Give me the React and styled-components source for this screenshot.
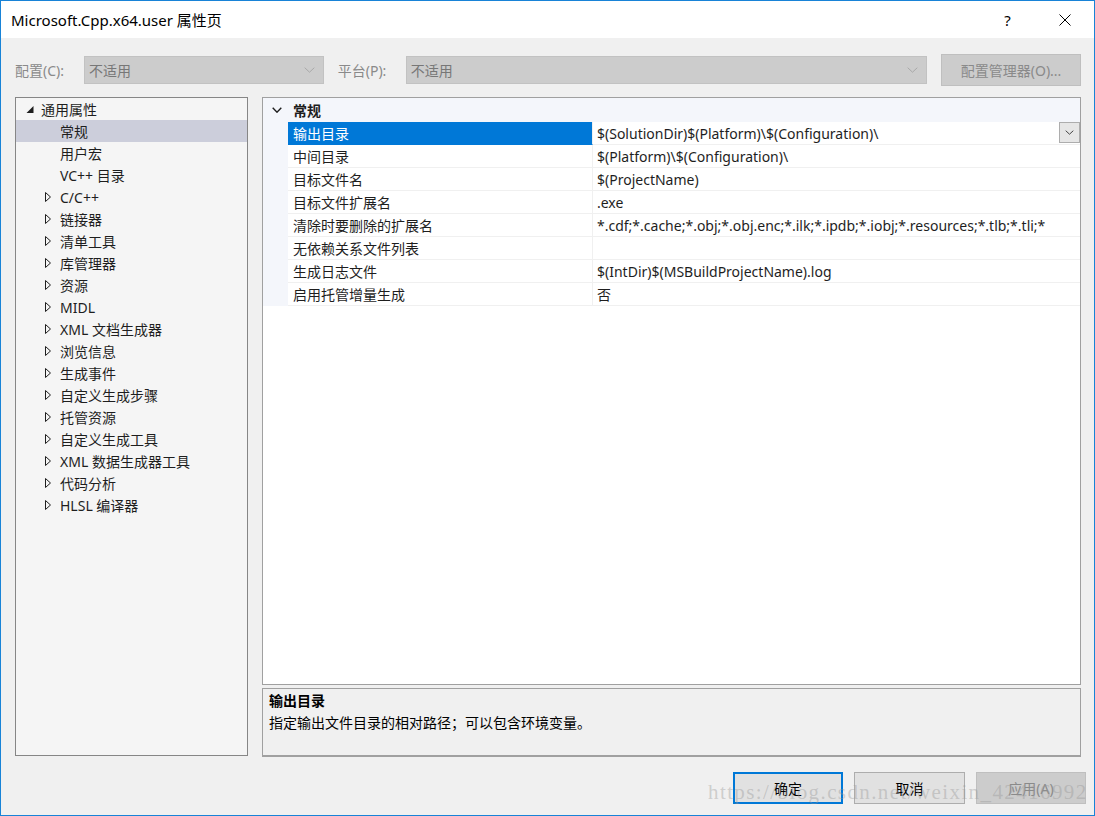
import React from "react";
import styled, { createGlobalStyle } from "styled-components";

const GlobalStyle = createGlobalStyle`
  body {
    margin: 0;
    font-family: "Noto Sans", "Noto Sans CJK SC", sans-serif;
    background: #f0f0f0;
  }
`;

const FONT = `"Noto Sans", "Noto Sans CJK SC", sans-serif`;

const Window = styled.div`
  position: relative;
  width: 1095px;
  height: 816px;
  box-sizing: border-box;
  border: 1px solid #1883d7;
  background: #f0f0f0;
  display: flex;
  flex-direction: column;
  font-family: ${FONT};
  overflow: hidden;
`;

const TitleBar = styled.div`
  height: 37px;
  background: #fff;
  display: flex;
  align-items: center;
  padding-left: 10px;
`;

const Title = styled.div`
  flex: 1;
  font-size: 15px;
  color: #000;
`;

const CaptionButton = styled.div`
  width: ${p => p.w}px;
  height: 37px;
  display: flex;
  align-items: center;
  justify-content: center;
  font-size: 15px;
  color: #000;
`;

const Body = styled.div`
  padding: 0 13px 0 14px;
  display: flex;
  flex-direction: column;
`;

const ConfigRow = styled.div`
  margin-top: 16px;
  height: 32px;
  display: flex;
  align-items: center;
`;

const ConfigLabel = styled.div`
  width: ${p => p.w}px;
  font-size: 14px;
  color: #8a8a8a;
`;

const Combo = styled.div`
  width: ${p => p.w}px;
  height: 28px;
  box-sizing: border-box;
  background: #cccccc;
  border: 1px solid #c2c2c2;
  display: flex;
  align-items: center;
  padding: 0 8px 0 4px;
  font-size: 14px;
  color: #777;
  margin-right: ${p => p.mr || 0}px;
  span { flex: 1; }
`;

const ManagerButton = styled.div`
  width: 140px;
  height: 32px;
  box-sizing: border-box;
  background: #cccccc;
  border: 1px solid #bfbfbf;
  display: flex;
  align-items: center;
  justify-content: center;
  font-size: 14px;
  color: #8a8a8a;
`;

const Main = styled.div`
  margin-top: 11px;
  display: flex;
  gap: 14px;
`;

const TreePanel = styled.div`
  width: 233px;
  height: 659px;
  box-sizing: border-box;
  background: #f5f5f5;
  border: 1px solid #868686;
  padding-top: 0px;
`;

const TreeRow = styled.div`
  height: 22px;
  display: flex;
  align-items: center;
  padding-left: ${p => 9 + p.level * 19}px;
  background: ${p => (p.selected ? "#cccedb" : "transparent")};
  font-size: 14px;
  color: #1e1e1e;
  white-space: nowrap;
`;

const Expander = styled.div`
  width: 16px;
  height: 22px;
  display: flex;
  align-items: center;
`;

const RightColumn = styled.div`
  width: 819px;
  display: flex;
  flex-direction: column;
  gap: 3px;
`;

const GridPanel = styled.div`
  height: 588px;
  box-sizing: border-box;
  background: #fff;
  border: 1px solid #a0a0a0;
`;

const GridRow = styled.div`
  display: grid;
  grid-template-columns: 25px 305px 1fr;
  height: ${p => (p.header ? 24 : 23)}px;
  background: ${p => (p.header ? "#f4f6fb" : "#fff")};
  font-size: 14px;
`;

const Gutter = styled.div`
  background: #f4f6fb;
  display: flex;
  align-items: center;
  justify-content: center;
  padding-left: 3px;
`;

const HeaderText = styled.div`
  grid-column: 2 / 4;
  display: flex;
  align-items: center;
  padding-left: 5px;
  font-weight: bold;
  color: #1e1e1e;
`;

const LabelCell = styled.div`
  display: flex;
  align-items: center;
  padding-left: 5px;
  border-bottom: 1px solid ${p => (p.selected ? "#0078d7" : "#f0f0f0")};
  border-right: 1px solid #f0f0f0;
  background: ${p => (p.selected ? "#0078d7" : "#fff")};
  color: ${p => (p.selected ? "#fff" : "#1e1e1e")};
  white-space: nowrap;
`;

const ValueCell = styled.div`
  display: flex;
  align-items: center;
  padding-left: 4px;
  border-bottom: 1px solid #f0f0f0;
  color: #1e1e1e;
  white-space: nowrap;
  overflow: hidden;
  span { flex: 1; overflow: hidden; }
`;

const DropButton = styled.div`
  width: 21px;
  height: 21px;
  box-sizing: border-box;
  background: #e6e6e6;
  border: 1px solid #adadad;
  display: flex;
  align-items: center;
  justify-content: center;
  flex-shrink: 0;
  margin-bottom: 1px;
`;

const DescPanel = styled.div`
  height: 69px;
  box-sizing: border-box;
  background: #f0f0f0;
  border: 1px solid #a0a0a0;
  border-bottom-width: 2px;
  padding: 1px 6px;
  font-size: 14px;
  color: #000;
  line-height: 22px;
`;

const DescTitle = styled.div`
  font-weight: bold;
`;

const Footer = styled.div`
  margin-top: 15px;
  display: flex;
  justify-content: flex-end;
  gap: 11px;
  padding-right: 8px;
`;

const DialogButton = styled.div`
  width: ${p => p.w}px;
  height: 32px;
  box-sizing: border-box;
  display: flex;
  align-items: center;
  justify-content: center;
  font-size: 14px;
  background: ${p => (p.disabled ? "#cccccc" : "#e1e1e1")};
  border: ${p => (p.primary ? "2px solid #0078d7" : p.disabled ? "1px solid #bfbfbf" : "1px solid #adadad")};
  color: ${p => (p.disabled ? "#8a8a8a" : "#000")};
`;

const Watermark = styled.div`
  position: absolute;
  left: 707px;
  top: 779px;
  font-family: "Liberation Serif", serif;
  font-size: 21px;
  letter-spacing: 1.4px;
  color: rgba(150, 150, 150, 0.4);
  pointer-events: none;
  white-space: nowrap;
`;

const Chevron = ({ w = 10, h = 6, color = "#1e1e1e", sw = 1.4 }) => (
  <svg width={w} height={h} viewBox={`0 0 ${w} ${h}`}>
    <polyline points={`0.7,0.7 ${w / 2},${h - 0.8} ${w - 0.7},0.7`} fill="none" stroke={color} strokeWidth={sw} />
  </svg>
);

const Expanded = () => (
  <svg width="16" height="22" viewBox="0 0 16 22">
    <polygon points="8.5,8 8.5,15 1.5,15" fill="#1e1e1e" />
  </svg>
);

const Collapsed = () => (
  <svg width="16" height="22" viewBox="0 0 16 22">
    <polygon points="1.5,6.5 1.5,15.5 6.5,11" fill="none" stroke="#1e1e1e" strokeWidth="1" />
  </svg>
);

const Close = () => (
  <svg width="12" height="12" viewBox="0 0 12 12">
    <path d="M0.5 0.5 L11.5 11.5 M11.5 0.5 L0.5 11.5" stroke="#000" strokeWidth="1" />
  </svg>
);

const treeItems = [
  { label: "通用属性", level: 0, state: "open" },
  { label: "常规", level: 1, selected: true },
  { label: "用户宏", level: 1 },
  { label: "VC++ 目录", level: 1 },
  { label: "C/C++", level: 1, state: "closed" },
  { label: "链接器", level: 1, state: "closed" },
  { label: "清单工具", level: 1, state: "closed" },
  { label: "库管理器", level: 1, state: "closed" },
  { label: "资源", level: 1, state: "closed" },
  { label: "MIDL", level: 1, state: "closed" },
  { label: "XML 文档生成器", level: 1, state: "closed" },
  { label: "浏览信息", level: 1, state: "closed" },
  { label: "生成事件", level: 1, state: "closed" },
  { label: "自定义生成步骤", level: 1, state: "closed" },
  { label: "托管资源", level: 1, state: "closed" },
  { label: "自定义生成工具", level: 1, state: "closed" },
  { label: "XML 数据生成器工具", level: 1, state: "closed" },
  { label: "代码分析", level: 1, state: "closed" },
  { label: "HLSL 编译器", level: 1, state: "closed" },
];

const props = [
  { name: "输出目录", value: "$(SolutionDir)$(Platform)\\$(Configuration)\\", selected: true },
  { name: "中间目录", value: "$(Platform)\\$(Configuration)\\" },
  { name: "目标文件名", value: "$(ProjectName)" },
  { name: "目标文件扩展名", value: ".exe" },
  { name: "清除时要删除的扩展名", value: "*.cdf;*.cache;*.obj;*.obj.enc;*.ilk;*.ipdb;*.iobj;*.resources;*.tlb;*.tli;*" },
  { name: "无依赖关系文件列表", value: "" },
  { name: "生成日志文件", value: "$(IntDir)$(MSBuildProjectName).log" },
  { name: "启用托管增量生成", value: "否" },
];

export default function App() {
  return (
    <Window>
      <GlobalStyle />
      <TitleBar>
        <Title>Microsoft.Cpp.x64.user 属性页</Title>
        <CaptionButton w={57}>?</CaptionButton>
        <CaptionButton w={58}><Close /></CaptionButton>
      </TitleBar>
      <Body>
        <ConfigRow>
          <ConfigLabel w={69}>配置(C):</ConfigLabel>
          <Combo w={240} mr={14}>
            <span>不适用</span>
            <Chevron w={11} h={6} color="#a8a8a8" sw={1} />
          </Combo>
          <ConfigLabel w={68}>平台(P):</ConfigLabel>
          <Combo w={522} mr={14}>
            <span>不适用</span>
            <Chevron w={11} h={6} color="#a8a8a8" sw={1} />
          </Combo>
          <ManagerButton>配置管理器(O)...</ManagerButton>
        </ConfigRow>
        <Main>
          <TreePanel>
            {treeItems.map(item => (
              <TreeRow key={item.label} level={item.level} selected={item.selected}>
                <Expander>
                  {item.state === "open" && <Expanded />}
                  {item.state === "closed" && <Collapsed />}
                </Expander>
                {item.label}
              </TreeRow>
            ))}
          </TreePanel>
          <RightColumn>
            <GridPanel>
              <GridRow header>
                <Gutter><Chevron w={10} h={6} /></Gutter>
                <HeaderText>常规</HeaderText>
              </GridRow>
              {props.map(p => (
                <GridRow key={p.name}>
                  <Gutter />
                  <LabelCell selected={p.selected}>{p.name}</LabelCell>
                  <ValueCell>
                    <span>{p.value}</span>
                    {p.selected && (
                      <DropButton><Chevron w={9} h={5} color="#444" sw={1} /></DropButton>
                    )}
                  </ValueCell>
                </GridRow>
              ))}
            </GridPanel>
            <DescPanel>
              <DescTitle>输出目录</DescTitle>
              <div>指定输出文件目录的相对路径；可以包含环境变量。</div>
            </DescPanel>
          </RightColumn>
        </Main>
      </Body>
      <Footer>
        <DialogButton w={110} primary>确定</DialogButton>
        <DialogButton w={111}>取消</DialogButton>
        <DialogButton w={110} disabled>应用(A)</DialogButton>
      </Footer>
      <Watermark>https://blog.csdn.net/weixin_42416992</Watermark>
    </Window>
  );
}
